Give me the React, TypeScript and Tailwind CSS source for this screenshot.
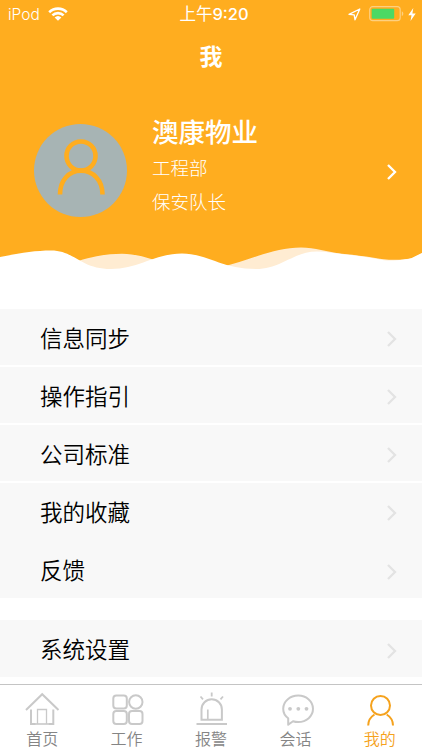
import type { ReactNode } from "react";

const menuGroups = [
  ["信息同步", "操作指引", "公司标准", "我的收藏", "反馈"],
  ["系统设置"],
];

const tabs: { label: string; icon: ReactNode; active?: boolean }[] = [
  {
    label: "首页",
    icon: (
      <svg width="36" height="36" viewBox="0 0 36 36" fill="none" stroke="currentColor">
        <path d="M2 19 18.200 3.200 34.500 19" strokeWidth="2" />
        <path d="M7 18.500v14.500h4.500M29.300 18.500v14.500h-4.500" strokeWidth="2" />
        <path d="M7 33h22" strokeWidth="1.6" />
        <path d="M13.5 33V18.500h9V33" strokeWidth="1.3" />
      </svg>
    ),
  },
  {
    label: "工作",
    icon: (
      <svg width="36" height="36" viewBox="0 0 36 36" fill="none" stroke="currentColor" strokeWidth="2">
        <rect x="4.300" y="4.500" width="13.500" height="13" rx="3" />
        <circle cx="26.800" cy="11" r="6.700" />
        <rect x="4.300" y="20" width="13.500" height="13" rx="3" />
        <rect x="20" y="20" width="13.500" height="13" rx="3" />
      </svg>
    ),
  },
  {
    label: "报警",
    icon: (
      <svg width="36" height="36" viewBox="0 0 36 36" fill="none" stroke="currentColor" strokeWidth="2">
        <path d="M8.500 28.800V18.500a10.200 10.200 0 0 1 20.400 0v10.300z" />
        <path d="M14.800 18.500v10" strokeWidth="1.700" />
        <path d="M3.500 33H34" />
        <path d="M18.700 1.500v4M7.500 5.500l2.500 2.800M30 5.500l-2.500 2.800" strokeWidth="1.800" />
      </svg>
    ),
  },
  {
    label: "会话",
    icon: (
      <svg width="38" height="36" viewBox="0 0 38 36" fill="none" stroke="currentColor" strokeWidth="2">
        <path
          d="M12.200 27.300C9 25 7.200 21.500 7.200 17.800 7.200 10.500 13.900 4.600 22.200 4.600S37 10.500 37 17.800 30.500 31 22.200 31c-1.800 0-3.600-.3-5.200-.8L12.200 33.800z"
          strokeLinejoin="round"
        />
        <g fill="currentColor" stroke="none">
          <circle cx="14" cy="17.800" r="1.900" />
          <circle cx="22.300" cy="17.800" r="1.900" />
          <circle cx="30.500" cy="17.800" r="1.900" />
        </g>
      </svg>
    ),
  },
  {
    label: "我的",
    active: true,
    icon: (
      <svg width="36" height="36" viewBox="0 0 36 36" fill="none" stroke="currentColor" strokeWidth="2">
        <circle cx="18.500" cy="14.500" r="9.500" />
        <path d="M6.200 34.500c0-4.700 2.300-8.500 6.300-11M31 34.500c0-4.700-2.300-8.500-6.300-11" />
      </svg>
    ),
  },
];

function Chevron({ className }: { className?: string }) {
  return (
    <svg className={className} width="10" height="18" viewBox="0 0 10 18" fill="none" stroke="currentColor" strokeWidth="2.300">
      <path d="M1 2l7 7-7 7" />
    </svg>
  );
}

function StatusBar() {
  return (
    <div className="grid h-7 grid-cols-3 items-center pr-1.5 pl-2 text-white">
      <div className="flex items-center gap-2">
        <span className="pt-px text-[15.500px] leading-none font-light">iPod</span>
        <svg width="20" height="14" viewBox="0 0 20 14" fill="none" stroke="currentColor" strokeWidth="2.600">
          <path d="M1.200 5.200a12.700 12.700 0 0 1 17.600 0M4.400 8.400a8 8 0 0 1 11.200 0" />
          <path d="M6.600 10.500a5 5 0 0 1 6.800 0L10 13.800z" fill="currentColor" stroke="none" />
        </svg>
      </div>
      <span className="pl-1 text-center text-[16.500px] leading-none whitespace-nowrap">
        上午<span className="font-medium">9:20</span>
      </span>
      <div className="flex items-center justify-end">
        <svg className="mr-2" width="13" height="13" viewBox="0 0 13 13" fill="none" stroke="currentColor" strokeWidth="1.300">
          <path d="M1 6.300 11.800 1 7 11.800 6.200 6.800z" strokeLinejoin="round" />
        </svg>
        <svg className="mr-1" width="35" height="16" viewBox="0 0 35 16">
          <rect x="0.700" y="0.700" width="30.500" height="14" rx="3" fill="none" stroke="#ffd07f" strokeWidth="1.200" />
          <rect x="2.700" y="2.700" width="22.500" height="10" rx="1" fill="#4cd964" />
          <path d="M32.800 5.300c2 .8 2 4 0 4.800z" fill="#ffd07f" />
        </svg>
        <svg width="8" height="13" viewBox="0 0 8 13" fill="currentColor">
          <path d="M5.300 0 .3 7.300h3.200L2.500 13l5.200-7.500H4.400z" />
        </svg>
      </div>
    </div>
  );
}

function Waves() {
  return (
    <svg className="block" width="422" height="50" viewBox="0 0 422 50">
      <rect width="422" height="36" fill="#ffad1f" />
      <path
        d="M78 26C95 21 108 18.700 122 18.700 134 18.700 145 22 153 24.500L190 36 222 32C250 25 274 12.600 301 12.600 315 12.600 327 17 342 18.800 360 20.500 372 22.500 384 24.300 394 25.500 407 24.500 412 23L422 18V40H78z"
        fill="#ffecd2"
      />
      <path
        d="M0 22C20 18 35 15.500 51 15.500 75 15.500 80 34 111 34 138 34 155 18.600 182 18.600 207 18.600 222 34 256 34 282 34 293 16.500 317 16.500 327 16.500 335 18.500 345 19.500 362 21 374 23.500 384 25.300 396 26 407 24.500 412 23L422 18V50H0z"
        fill="#fff"
      />
    </svg>
  );
}

export default function App() {
  return (
    <div className="flex h-[750px] w-[422px] flex-col overflow-hidden bg-white font-['Inter','Noto_Sans_CJK_SC',sans-serif]">
      <header>
        <div className="h-[235px] bg-[#ffad1f]">
          <StatusBar />
          <h1 className="h-14 text-center text-[23px] leading-[58px] font-bold text-white">我</h1>
          <div className="flex items-start pt-10 pr-[25px] pl-[34px] text-white">
            <div className="flex size-[93px] justify-center rounded-full bg-[#a7b4b4] pt-[13px]">
              <svg width="50" height="58" viewBox="0 0 50 58" fill="none" stroke="#ffad1f" strokeWidth="4.600">
                <circle cx="25" cy="19" r="14.500" />
                <path d="M4 57.500C4 43 13 33.800 25 33.800S46.500 43 46.500 57.500" />
              </svg>
            </div>
            <div className="-mt-2.5 ml-[25px] flex flex-1 flex-col">
              <p className="text-[26.500px] leading-[37px] font-medium">澳康物业</p>
              <p className="text-[18.500px] leading-[34px] font-light">工程部</p>
              <p className="text-[18.500px] leading-[34px] font-light">保安队长</p>
            </div>
            <Chevron className="mt-[39px]" />
          </div>
        </div>
        <Waves />
      </header>

      <main className="flex flex-1 flex-col gap-[22px] pt-6">
        {menuGroups.map((group) => (
          <ul key={group[0]}>
            {group.map((item) => (
              <li
                key={item}
                className="flex h-[58px] items-center justify-between border-b-2 border-white bg-[#f8f8f8] pr-[25px] pl-10 nth-4:border-[#f8f8f8] last:h-[57px] last:border-b-0"
              >
                <span className="pt-1 text-[22.500px] leading-none font-[350] text-black">{item}</span>
                <Chevron className="mt-1 text-[#e3e3e3]" />
              </li>
            ))}
          </ul>
        ))}
      </main>

      <nav className="flex h-[66px] border-t border-[#c4c4c4] bg-white">
        {tabs.map((tab) => (
          <div
            key={tab.label}
            className={`flex flex-1 flex-col items-center pt-1.5 ${tab.active ? "text-[#f5a21d]" : "text-[#c9c9c9]"}`}
          >
            {tab.icon}
            <span className={`mt-0.5 text-[16px] leading-5 font-[350] ${tab.active ? "" : "text-[#858585]"}`}>{tab.label}</span>
          </div>
        ))}
      </nav>
    </div>
  );
}
